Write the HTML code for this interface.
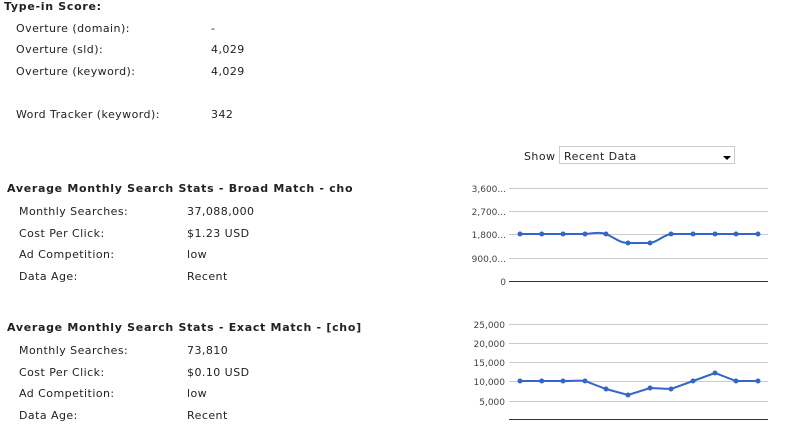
<!DOCTYPE html>
<html><head><style>
body{margin:0;width:790px;height:430px;background:#fff;font-family:"DejaVu Sans","Liberation Sans",sans-serif;font-size:11px;color:#222;position:relative;overflow:hidden}
.t{position:absolute;white-space:nowrap;line-height:13px;letter-spacing:0.45px;top:1px}
.b{font-weight:bold;color:#222;letter-spacing:0.7px}
svg{position:absolute;left:0;top:0}
</style></head><body>
<div class="t b" style="left:4px;top:0px">Type-in Score:</div>
<div class="t" style="left:16px;top:22px">Overture (domain):</div><div class="t" style="left:211px;top:22px">-</div>
<div class="t" style="left:16px;top:43px">Overture (sld):</div><div class="t" style="left:211px;top:43px">4,029</div>
<div class="t" style="left:16px;top:65px">Overture (keyword):</div><div class="t" style="left:211px;top:65px">4,029</div>
<div class="t" style="left:16px;top:108px">Word Tracker (keyword):</div><div class="t" style="left:211px;top:108px">342</div>

<div class="t" style="left:524px;top:150px">Show</div>
<div style="position:absolute;left:559px;top:146px;width:176px;height:18px;border:1px solid #ccc;box-sizing:border-box"></div>
<div class="t" style="left:564px;top:150px">Recent Data</div>
<div style="position:absolute;left:723px;top:156px;width:0;height:0;border-left:4px solid transparent;border-right:4px solid transparent;border-top:4px solid #000"></div>

<div class="t b" style="left:7px;top:182px">Average Monthly Search Stats - Broad Match - cho</div>
<div class="t" style="left:19px;top:205px">Monthly Searches:</div><div class="t" style="left:187px;top:205px">37,088,000</div>
<div class="t" style="left:19px;top:227px">Cost Per Click:</div><div class="t" style="left:187px;top:227px">$1.23 USD</div>
<div class="t" style="left:19px;top:248px">Ad Competition:</div><div class="t" style="left:187px;top:248px">low</div>
<div class="t" style="left:19px;top:270px">Data Age:</div><div class="t" style="left:187px;top:270px">Recent</div>

<div class="t b" style="left:7px;top:321px">Average Monthly Search Stats - Exact Match - [cho]</div>
<div class="t" style="left:19px;top:344px">Monthly Searches:</div><div class="t" style="left:187px;top:344px">73,810</div>
<div class="t" style="left:19px;top:366px">Cost Per Click:</div><div class="t" style="left:187px;top:366px">$0.10 USD</div>
<div class="t" style="left:19px;top:387px">Ad Competition:</div><div class="t" style="left:187px;top:387px">low</div>
<div class="t" style="left:19px;top:409px">Data Age:</div><div class="t" style="left:187px;top:409px">Recent</div>

<svg width="790" height="430" font-family="DejaVu Sans, sans-serif" font-size="9" fill="#444">
<g stroke="#ccc" stroke-width="1">
<line x1="509" x2="768" y1="188.5" y2="188.5"/><line x1="509" x2="768" y1="211.5" y2="211.5"/><line x1="509" x2="768" y1="234.5" y2="234.5"/><line x1="509" x2="768" y1="258.5" y2="258.5"/>
<line x1="509" x2="768" y1="324.5" y2="324.5"/><line x1="509" x2="768" y1="343.5" y2="343.5"/><line x1="509" x2="768" y1="362.5" y2="362.5"/><line x1="509" x2="768" y1="381.5" y2="381.5"/><line x1="509" x2="768" y1="401.5" y2="401.5"/>
</g>
<line x1="509" x2="768" y1="281.5" y2="281.5" stroke="#333"/>
<line x1="509" x2="768" y1="419.5" y2="419.5" stroke="#333"/>
<g text-anchor="end">
<text x="506" y="192">3,600...</text><text x="506" y="215">2,700...</text><text x="506" y="238">1,800...</text><text x="506" y="262">900,0...</text><text x="506" y="285">0</text>
<text x="505" y="328">25,000</text><text x="505" y="347">20,000</text><text x="505" y="366">15,000</text><text x="505" y="385">10,000</text><text x="505" y="405">5,000</text>
</g>
<g stroke="#3366cc" stroke-width="2" fill="none">
<path d="M520 234 L541.7 234 L563 234 L585 234 C595 233 600 232 606 234 C615 238 620 243 628 243 L650 243 C658 242 663 235 671 234 L693 234 L715 234 L736 234 L758 234"/>
<path d="M520 381 L541.7 381 L563 381 C575 381 580 380 585 381 L606 389 L628 395 L650 388 L671 389 L693 381 L715 373 L736 381 L758 381"/>
</g>
<g fill="#3366cc">
<circle cx="520" cy="234" r="2.5"/><circle cx="541.7" cy="234" r="2.5"/><circle cx="563" cy="234" r="2.5"/><circle cx="585" cy="234" r="2.5"/><circle cx="606" cy="234" r="2.5"/><circle cx="628" cy="243" r="2.5"/><circle cx="650" cy="243" r="2.5"/><circle cx="671" cy="234" r="2.5"/><circle cx="693" cy="234" r="2.5"/><circle cx="715" cy="234" r="2.5"/><circle cx="736" cy="234" r="2.5"/><circle cx="758" cy="234" r="2.5"/>
<circle cx="520" cy="381" r="2.5"/><circle cx="541.7" cy="381" r="2.5"/><circle cx="563" cy="381" r="2.5"/><circle cx="585" cy="381" r="2.5"/><circle cx="606" cy="389" r="2.5"/><circle cx="628" cy="395" r="2.5"/><circle cx="650" cy="388" r="2.5"/><circle cx="671" cy="389" r="2.5"/><circle cx="693" cy="381" r="2.5"/><circle cx="715" cy="373" r="2.5"/><circle cx="736" cy="381" r="2.5"/><circle cx="758" cy="381" r="2.5"/>
</g>
</svg>
</body></html>
